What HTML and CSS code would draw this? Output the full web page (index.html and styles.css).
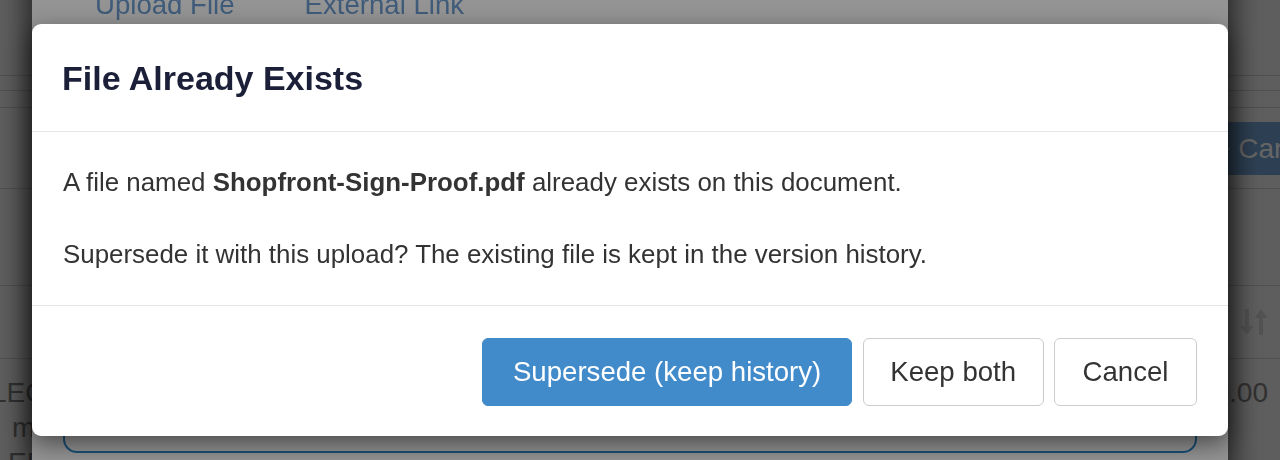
FILE: index.html
```html
<!DOCTYPE html>
<html lang="en">
<head>
<meta charset="utf-8">
<title>File Already Exists</title>
<link rel="stylesheet" href="styles.css">
</head>
<body>
<div class="page">
  <div class="row r1"></div>
  <div class="row r2"></div>
  <div class="row r3"></div>
  <div class="row r4"><button class="card-btn">+ Card</button></div>
  <div class="row r5"></div>
  <div class="row r6">
    <svg class="sort" width="28" height="30" viewBox="0 0 28 30" aria-hidden="true">
      <path d="M7 2 V22" stroke="currentColor" stroke-width="4" fill="none"/>
      <path d="M0.5 19 H13.5 L7 28 Z" fill="currentColor"/>
      <path d="M21 28 V8" stroke="currentColor" stroke-width="4" fill="none"/>
      <path d="M14.5 11 H27.5 L21 2 Z" fill="currentColor"/>
    </svg>
  </div>
  <div class="row r7">
    <div class="cell-text">
      <div class="l1">LEC</div>
      <div class="l2">mr</div>
      <div class="l3">ED</div>
    </div>
    <div class="amount">0.00</div>
  </div>
</div>

<div class="under-modal">
  <div class="tabs">
    <span class="tab">Upload File</span>
    <span class="tab">External Link</span>
  </div>
  <div class="drop-box"></div>
</div>

<div class="backdrop"></div>

<div class="modal" role="dialog" aria-labelledby="dlg-title">
  <div class="modal-header">
    <h2 id="dlg-title" class="modal-title">File Already Exists</h2>
  </div>
  <div class="modal-body">
    <p>A file named <strong>Shopfront-Sign-Proof.pdf</strong> already exists on this document.</p>
    <p>Supersede it with this upload? The existing file is kept in the version history.</p>
  </div>
  <div class="modal-footer">
    <button class="btn btn-primary">Supersede (keep history)</button>
    <button class="btn btn-keep">Keep both</button>
    <button class="btn btn-cancel">Cancel</button>
  </div>
</div>
</body>
</html>
```

FILE: styles.css
```css
* { box-sizing: border-box; }

html, body {
  margin: 0;
  padding: 0;
  width: 1280px;
  height: 460px;
  overflow: hidden;
}

body {
  font-family: "Liberation Sans", Arial, Helvetica, sans-serif;
  background: #a2a2a2;
}

/* ---------- underlying page ---------- */
.page {
  display: flex;
  flex-direction: column;
  width: 1280px;
  background: #a2a2a2;
}

.row {
  border-bottom: 1px solid #8a8a8a;
  display: flex;
}

.r1 { height: 76px; }
.r2 { height: 15px; }
.r3 { height: 17px; }
.r4 {
  height: 81px;
  padding-top: 14px;
  justify-content: flex-end;
  margin-right: -44px;
}
.r5 { height: 97px; }
.r6 {
  height: 73px;
  align-items: center;
  justify-content: flex-end;
  padding-right: 12px;
}
.r7 {
  border-bottom: none;
  padding-top: 16px;
  justify-content: space-between;
  font-size: 28px;
  line-height: 35px;
  color: #555555;
}

.card-btn {
  height: 53px;
  padding: 0 25px;
  border: none;
  border-radius: 4px;
  background: #4f6f90;
  color: #b0b0b0;
  font-family: inherit;
  font-size: 28px;
}

.sort { color: #8e8e8e; display: block; }

.cell-text { margin-left: -9px; }
.cell-text .l2 { margin-left: 21px; }
.cell-text .l3 { margin-left: 17px; }

.amount { padding-right: 12px; }

/* ---------- underlying modal ---------- */
.under-modal {
  position: fixed;
  left: 32px;
  top: -40px;
  bottom: -60px;
  width: 1196px;
  background: #ffffff;
  border-radius: 9px;
  box-shadow: 0 0 30px 4px rgba(0, 0, 0, 0.7);
  display: flex;
  flex-direction: column;
  padding: 28px 31px 67px;
}

.tabs {
  display: flex;
  gap: 6px;
  font-size: 27.6px;
  line-height: 33px;
  color: #6f9fd2;
}

.tab { padding: 0 32px; }

.drop-box {
  margin-top: auto;
  height: 200px;
  border: 2px solid #2c8bcc;
  border-radius: 14px;
}

/* ---------- backdrop ---------- */
.backdrop {
  position: fixed;
  inset: 0;
  background: rgba(0, 0, 0, 0.42);
}

/* ---------- top modal ---------- */
.modal {
  position: fixed;
  left: 32px;
  top: 24px;
  width: 1196px;
  background: #ffffff;
  border-radius: 9px;
  box-shadow: 0 8px 24px rgba(0, 0, 0, 0.5);
}

.modal-header {
  padding: 33.5px 31px 33.5px 30px;
  border-bottom: 1px solid #e6e6e6;
}

.modal-title {
  margin: 0;
  font-size: 34px;
  line-height: 40px;
  font-weight: 700;
  color: #1b1f38;
}

.modal-body {
  padding: 31.5px 31px 32.5px;
  font-size: 25.9px;
  line-height: 37px;
  color: #333333;
}

.modal-body p { margin: 0; }
.modal-body p + p { margin-top: 35px; }

.modal-footer {
  border-top: 1px solid #e6e6e6;
  padding: 32px 31px 30px;
  display: flex;
  justify-content: flex-end;
  gap: 10.5px;
}

.btn {
  height: 68px;
  padding: 0 27.5px;
  border: 1px solid #cccccc;
  border-radius: 6px;
  background: #ffffff;
  color: #333333;
  font-family: inherit;
  font-size: 27.6px;
  line-height: 1;
}

.btn-primary {
  padding: 0 30px;
  background: #428bca;
  border-color: #428bca;
  color: #ffffff;
}

.btn-keep { padding: 0 26.5px; }
```
